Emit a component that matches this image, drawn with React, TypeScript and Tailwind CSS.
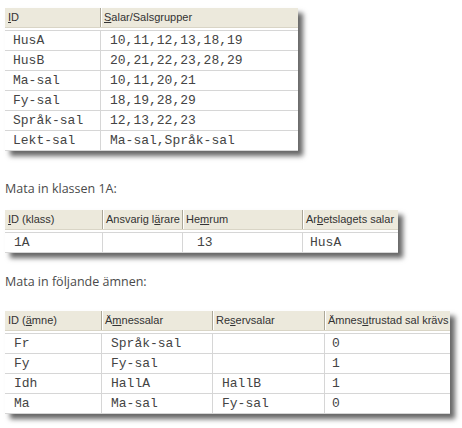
import React from "react";

type Col = { w: number; head: React.ReactNode };

function Table({ cols, rows, pads }: { cols: Col[]; rows: string[][]; pads: number[] }) {
  const total = cols.reduce((a, c) => a + c.w, 0);
  return (
    <div
      className="bg-white shadow-[5px_5px_5px_rgba(0,0,0,0.6)] ml-[5px]"
      style={{ width: total }}
    >
      <div className="flex h-[20px] bg-[#ece9dc] border-b border-[#d9d5c6]">
        {cols.map((c, i) => (
          <div
            key={i}
            className={
              "flex items-center pl-[3px] text-[11px] text-[#333333] whitespace-nowrap overflow-hidden " +
              (i > 0 ? "border-l border-[#aca899] shadow-[inset_1px_0_0_#ffffff]" : "")
            }
            style={{ width: c.w, fontFamily: '"Liberation Sans", Arial, sans-serif' }}
          >
            {c.head}
          </div>
        ))}
      </div>
      <div className="h-[2px]" />
      {rows.map((r, ri) => (
        <div key={ri} className="flex h-[20px] border-t border-[#d6d6d6]">
          {r.map((cell, ci) => (
            <div
              key={ci}
              className={
                "flex items-center text-[13px] text-[#444444] whitespace-nowrap " +
                (ci > 0 ? "border-l border-[#d6d6d6]" : "")
              }
              style={{
                width: cols[ci].w,
                paddingLeft: pads[ci],
                fontFamily: '"Liberation Mono", "Courier New", monospace',
              }}
            >
              {cell}
            </div>
          ))}
        </div>
      ))}
      <div className="border-t border-[#d6d6d6]" />
    </div>
  );
}

export default function App() {
  const caption = "text-[12.5px] leading-[18px] text-[#4a4a4a] pl-[5px]";
  const capFont = { fontFamily: '"Open Sans", "Noto Sans", sans-serif' };
  return (
    <div className="w-[462px] h-[428px] bg-white pt-[8px] overflow-hidden">
      <Table
        cols={[
          { w: 95, head: <span><u>I</u>D</span> },
          { w: 198, head: <span><u>S</u>alar/Salsgrupper</span> },
        ]}
        pads={[8, 9]}
        rows={[
          ["HusA", "10,11,12,13,18,19"],
          ["HusB", "20,21,22,23,28,29"],
          ["Ma-sal", "10,11,20,21"],
          ["Fy-sal", "18,19,28,29"],
          ["Språk-sal", "12,13,22,23"],
          ["Lekt-sal", "Ma-sal,Språk-sal"],
        ]}
      />
      <div className={caption + " mt-[29px]"} style={capFont}>
        Mata in klassen 1A:
      </div>
      <div className="mt-[12px]">
        <Table
          cols={[
            { w: 97, head: <span><u>I</u>D (klass)</span> },
            { w: 80, head: <span>Ansvarig l<u>ä</u>rare</span> },
            { w: 120, head: <span>He<u>m</u>rum</span> },
            { w: 96, head: <span>Ar<u>b</u>etslagets salar</span> },
          ]}
          pads={[9, 0, 14, 7]}
          rows={[["1A", "", "13", "HusA"]]}
        />
      </div>
      <div className={caption + " mt-[20px]"} style={capFont}>
        Mata in följande ämnen:
      </div>
      <div className="mt-[20px]">
        <Table
          cols={[
            { w: 96, head: <span>ID (<u>ä</u>mne)</span> },
            { w: 111, head: <span>Ä<u>m</u>nessalar</span> },
            { w: 112, head: <span>Re<u>s</u>ervsalar</span> },
            { w: 126, head: <span>Ämnes<u>u</u>trustad sal krävs</span> },
          ]}
          pads={[9, 9, 9, 7]}
          rows={[
            ["Fr", "Språk-sal", "", "0"],
            ["Fy", "Fy-sal", "", "1"],
            ["Idh", "HallA", "HallB", "1"],
            ["Ma", "Ma-sal", "Fy-sal", "0"],
          ]}
        />
      </div>
    </div>
  );
}
